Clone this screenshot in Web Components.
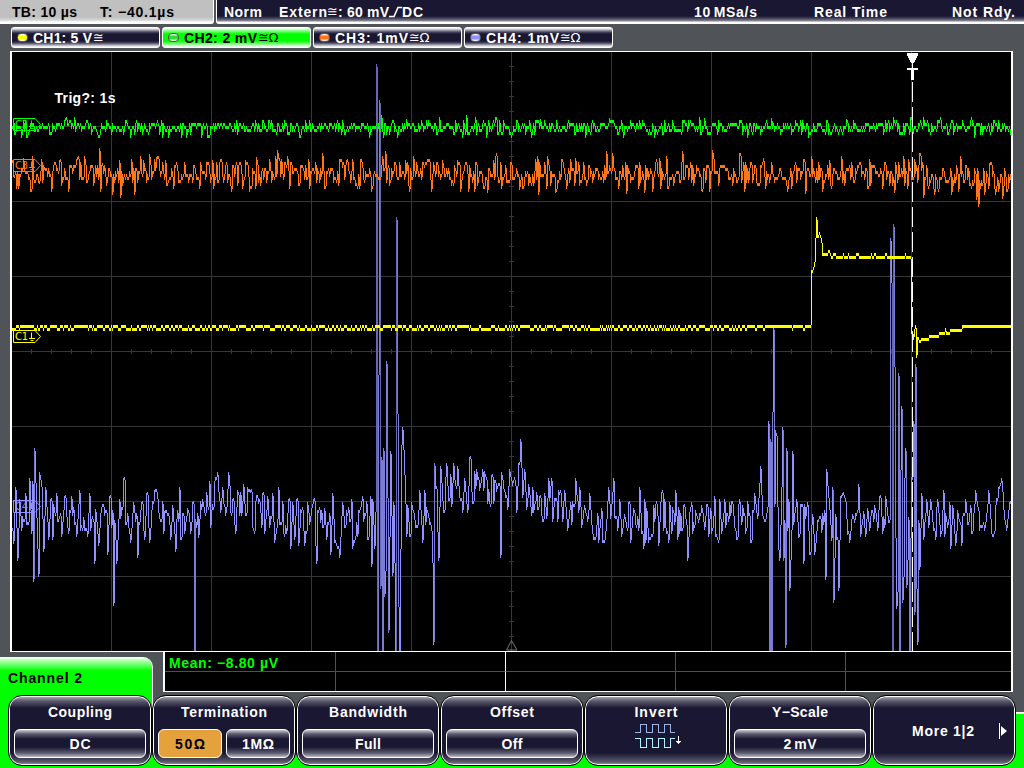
<!DOCTYPE html>
<html lang="en">
<head>
<meta charset="utf-8">
<title>Oscilloscope</title>
<style>
    * { box-sizing: border-box; }
    body {
        margin: 0;
        width: 1024px;
        height: 768px;
        overflow: hidden;
        background: #505458;
        font: bold 14px/16px "Liberation Sans", Arial, sans-serif;
        color: #fff;
    }
</style>
</head>
<body>
<scope-app></scope-app>

<script>
// one line of text, tracked out to the width given in px
class FitLabel extends HTMLElement {
    connectedCallback() {
        if (this.shadowRoot) return;
        this.attachShadow({mode: 'open'}).innerHTML = `
        <style>
            :host { display: block; flex: none; }
            :host([tight]) { word-spacing: -2px; }
            span { display: inline-block; white-space: nowrap; }
        </style>
        <span><slot></slot></span>`;
        const want = Number(this.getAttribute('w'));
        const span = this.shadowRoot.querySelector('span');
        const count = this.textContent.length;
        const natural = span.getBoundingClientRect().width;
        if (want && natural) {
            span.style.letterSpacing = ((want - natural) / (count - 1)).toFixed(3) + 'px';
            this.style.width = want + 'px';
        }
    }
}

class StatusBar extends HTMLElement {
    connectedCallback() {
        this.attachShadow({mode: 'open'}).innerHTML = `
        <style>
            :host { display: flex; height: 24px; gap: 2px; }
            div { display: flex; box-sizing: border-box; padding-top: 4px; height: 24px; }
            .time {
                width: 214px;
                padding-left: 12px;
                gap: 23px;
                color: #000;
                background: linear-gradient(#c0c0c0 17px, #d4d4d4 20px, #fff 22px);
                border-right: 1px solid #fff;
                border-radius: 0 0 3px 0;
            }
            .trig {
                flex: 1;
                padding-left: 7px;
                background: linear-gradient(#1a1733 16px, #3c3a52 18px, #8a8998 21px, #fff 22px);
                border-left: 1px solid #fff;
                border-radius: 0 0 0 3px;
            }
            .cong { font: 13px/16px "DejaVu Sans", sans-serif; width: 11px; }
            svg { display: block; margin-top: 1px; }
        </style>
        <div class="time">
            <fit-label w="65">TB: 10 µs</fit-label>
            <fit-label w="74">T: −40.1µs</fit-label>
        </div>
        <div class="trig">
            <fit-label w="38">Norm</fit-label>
            <fit-label w="48" style="margin-left:17px">Extern</fit-label>
            <span class="cong">≅</span>
            <fit-label w="51">: 60 mV</fit-label>
            <svg width="13" height="14"><path d="M0 11.5h5l4-9h4" fill="none" stroke="#fff" stroke-width="1.6"/></svg>
            <fit-label w="21">DC</fit-label>
            <fit-label w="63" style="margin-left:271px" tight>10 MSa/s</fit-label>
            <fit-label w="73" style="margin-left:57px">Real Time</fit-label>
            <fit-label w="63" style="margin-left:65px">Not Rdy.</fit-label>
        </div>`;
    }
}

class ChannelChip extends HTMLElement {
    connectedCallback() {
        const w = this.getAttribute('w');
        this.attachShadow({mode: 'open'}).innerHTML = `
        <style>
            :host {
                display: flex;
                box-sizing: border-box;
                width: 149px;
                height: 21px;
                padding: 2px 0 0 5px;
                border: 1px solid #fff;
                border-radius: 3px;
                background: linear-gradient(#fff 0, #aaa9b6 2px, #4a4860 4px, #1a1733 6px, #1a1733 13px, #4a4860 15px, #aaa9b6 17px, #fff 19px);
            }
            :host([active]) {
                color: #000;
                background: linear-gradient(#fff 0, #aaffaa 2px, #00ff00 6px, #00ff00 13px, #aaffaa 17px, #fff 19px);
            }
            i {
                width: 11px;
                height: 9px;
                margin: 3px 5px 0 0;
                box-sizing: border-box;
                border: 1px solid #555;
                border-radius: 4px;
                background: linear-gradient(#fff, var(--c) 35%, var(--c) 65%, #fff);
            }
            .unit { font: 13px/16px "DejaVu Sans", sans-serif; padding-left: 1px; letter-spacing: -.3px; }
        </style>
        <i></i><fit-label w="${w}">${this.getAttribute('text')}</fit-label><span class="unit"><slot></slot></span>`;
    }
}

// extremes of the channel 4 signal, x:y
const CH4 = `14:541 16:487 18:558 20:499 22:528 26:493 27:522 30:478 32:531 33:481 34:579 35:448 37:515 39:574 40:472
42:484 44:549 46:487 49:537 51:499 53:537 57:493 58:519 62:534 65:496 67:514 72:496 77:534 80:490 81:528 83:528 84:517 85:528 88:534
90:493 95:561 96:509 99:543 101:513 106:510 108:552 110:496 114:603 115:520 117:561 120:499 124:478 131:540 134:502 138:555
142:502 145:537 147:493 150:540 152:510 155:490 158:496 164:531 165:511 171:537 173:505 176:549 180:487 181:537 185:531
188:508 193:502 195:651 199:535 203:499 206:513 210:481 211:525 215:481 218:472 221:510 223:487 227:507 229:472 233:499
236:531 238:490 242:513 244:484 246:513 248:487 251:490 253:525 255:531 260:499 262:525 263:493 265:531 268:496 270:525
273:493 275:540 279:487 280:522 287:531 289:499 291:546 293:502 295:537 297:499 299:543 301:509 305:543 308:502 310:522
312:508 314:499 317:561 321:520 325:508 327:537 331:552 333:493 335:540 338:546 340:555 343:502 345:525 352:499 353:546
356:536 360:510 363:496 369:537 371:496 372:564 373:499 375:546 376:512 377:64 378:651 380:100 381:586 382:457 383:651
384:448 385:594 386:571 387:361 389:630 391:451 393:573 394:502 396:651 397:217 399:604 400:651 402:445 403:427 405:472
407:534 408:505 410:534 412:502 415:517 420:490 423:540 425:490 429:515 432:528 434:642 435:463 438:529 439:558 441:466
443:498 444:510 447:463 449:498 454:463 458:466 460:495 463:510 465:478 468:510 470:457 473:501 477:469 480:488 483:469
484:488 488:501 492:475 497:489 501:555 502:472 505:489 508:507 510:469 512:478 517:510 519:463 521:439 523:495 525:469
527:507 529:484 532:513 533:487 534:510 540:496 544:519 545:493 547:516 549:478 550:498 552:478 553:519 558:519 559:490
561:490 563:519 565:490 568:528 571:502 572:522 576:478 579:510 580:487 582:525 585:505 588:519 590:493 592:522 594:537
596:537 598:513 599:540 602:508 603:540 606:531 609:487 611:516 614:478 615:515 618:528 620:499 622:534 625:514 628:528
629:502 631:540 634:508 640:487 642:531 644:546 645:499 646:540 647:508 649:540 652:534 654:505 659:543 661:502 663:490
664:528 665:499 666:525 669:540 670:502 672:531 676:490 678:537 682:528 684:505 688:558 690:512 692:502 696:510 699:520
702:505 705:527 709:534 711:508 715:496 716:534 719:540 720:499 722:531 725:499 726:525 730:502 736:528 740:499 742:522
743:505 747:528 751:540 755:493 758:516 761:466 763:513 766:519 768:507 769:421 770:651 771:439 772:651 773:412 774:327
775:504 776:430 777:433 778:504 779:547 780:558 782:487 783:427 784:558 785:520 786:645 787:448 788:528 789:499 790:588
792:530 793:451 794:522 797:499 799:535 804:561 808:502 810:552 813:514 815:552 818:520 822:530 826:577 827:469 830:507
832:538 833:487 834:600 836:514 839:588 841:496 843:493 846:499 848:532 850:540 853:514 855:520 859:484 861:534 864:511
866:534 868:508 870:528 875:505 878:528 880:496 882:514 886:496 889:520 890:520 891:238 892:280 893:651 894:224 895:364
896:535 897:606 898:592 899:373 900:651 901:470 902:406 903:600 904:577 905:478 906:448 907:585 909:517 910:651 911:538
912:477 914:421 915:612 916:364 917:586 918:642 919:520 920:567 922:493 924:537 927:499 929:525 931:499 934:528 938:499
940:522 944:490 945:534 950:502 951:546 953:505 956:543 962:543 966:499 968:522 971:505 972:531 976:490 979:508 984:522
989:490 992:531 995:531 996:505 999:487 1002:478 1005:517 1007:528 1010:502`;

const CH3 = `13:160 15:175 24:158 31:189 40:181 45:167 52:189 60:160 69:189 78:157 100:148 101:189 103:163 113:192 121:195 120:160 135:192
144:160 150:154 157:157 166:160 174:186 213:160 232:189 246:160 257:157 280:158 310:186 347:160 372:189 386:151 406:160 410:189
432:189 443:160 458:160 461:189 488:190 494:160 520:187 536:159 556:190 576:158 607:151 627:191 645:190 660:158 683:151
702:188 713:150 740:153 745:189 764:158 788:189 806:191 830:160 870:159 895:190 915:159 935:192 961:156 977:197 979:204
990:163 1003:196`;

const CH2 = `22:135 27:135 66:118 99:135 131:135 182:135 187:135 208:135 300:135 382:115 384:135 407:119 467:115 463:135
487:135 512:135 541:119 610:118 655:135 705:118 748:135 772:118 809:135 847:119 911:117 913:134 975:135`;

const PULSE = `811:270 812:270 813:267 814:262 815:238 816:217 817:235 818:235 819:232 820:235 821:240 822:253 823:253
827:253 828:250 829:250 830:253 831:256 832:256 833:253 835:253 836:256 842:256 843:253 844:256 847:256 848:253 849:256
855:256 856:253 858:253 859:256 870:256 871:253 872:256 874:253 876:256 884:256 885:253 887:256 904:256 905:253 906:256
910:256 911:331 912:331 913:337 914:329 915:325 916:355 917:337 918:337 919:340 920:340 921:338 928:338 929:335 938:335
939:332 944:332 945:328 946:332 949:332 950:329 961:329 962:325 1010:325`;

const LEFT = 12, RIGHT = 1011;

function random(seed) {
    return () => {
        seed = (seed * 1664525 + 1013904223) >>> 0;
        return seed / 4294967296;
    };
}

function knots(text) {
    return text.trim().split(/\s+/).map(p => p.split(':').map(Number)).sort((a, b) => a[0] - b[0]);
}

// a peak fills its own column and the next, so the sample sits one px left of its centre
function noise(text, seed, base, spread, dense) {
    const rnd = random(seed);
    const ks = knots(text).map(([x, y]) => [x - 1, y]);
    const fixed = new Map(ks);
    const ys = [];
    let k = 0;
    for (let x = LEFT; x < RIGHT; x++) {
        while (k < ks.length - 1 && ks[k][0] <= x) k++;
        const a = ks[Math.max(k - 1, 0)], b = ks[k];
        const gap = b[0] - a[0];
        const r = (rnd() + rnd() + rnd() - 1.5) * spread;
        let y = base(x) + r;
        if (dense && gap > 0 && gap < 4) {
            y = a[1] + (b[1] - a[1]) * (x - a[0]) / gap + r * .2;
        }
        if (ys.length && rnd() < .18) y = ys[ys.length - 1];
        y = Math.round(y / 3) * 3;
        if (y > 560) y = 560;
        ys.push(fixed.has(x) ? fixed.get(x) : y);
    }
    return ys;
}

function channel1() {
    const rnd = random(7);
    const ys = [];
    let low = false;
    for (let x = LEFT; x < 811; x++) {
        if (rnd() < (low ? .4 : .3)) low = !low;
        if (x > 767 && x < 787) low = false;
        ys.push(low ? 328 : 325);
    }
    const ks = knots(PULSE);
    let k = 0;
    for (let x = 811; x < RIGHT; x++) {
        while (k + 1 < ks.length && ks[k + 1][0] <= x) k++;
        ys.push(ks[k][1]);
    }
    return ys;
}

// one column per sample, long columns are drawn dimmer
function columns(ys, color, dims) {
    const paths = ['', '', ''];
    let prev = ys[0];
    ys.forEach((y, i) => {
        let top = y, bottom = y + 3;
        if (prev < y) top = Math.min(prev + 3, y);
        if (prev > y) bottom = Math.max(prev, y + 3);
        const h = bottom - top;
        const level = dims ? (h > 300 ? 2 : h > 110 ? 1 : 0) : 0;
        paths[level] += `M${LEFT + i} ${top}h1v${h}h-1z`;
        prev = y;
    });
    const fills = [color].concat(dims || []);
    return paths.map((d, n) => d ? `<path fill="${fills[n]}" d="${d}"/>` : '').join('');
}

class ScopeScreen extends HTMLElement {
    connectedCallback() {
        const ch4Base = x => x > 435 && x < 530 ? 486 : x > 205 && x < 262 ? 503 : x > 530 && x < 590 ? 507 : 517;
        const traces =
            columns(noise(CH4, 41, ch4Base, 17, true), '#9090ff', ['#7b7bd8', '#6666b4']) +
            columns(noise(CH3, 33, x => x > 920 ? 178 : 172, 15), '#ff7519') +
            columns(channel1(), '#ffff00') +
            columns(noise(CH2, 22, () => 126, 6.5), '#00ff00');

        this.attachShadow({mode: 'open'}).innerHTML = `
        <style>
            :host {
                display: block;
                box-sizing: border-box;
                width: 1003px;
                height: 601px;
                border: solid #fff;
                border-width: 1px 2px;
                background: #000;
            }
            svg { display: block; }
            .tag { font: 10px "DejaVu Sans", sans-serif; }
            .note { font: bold 14px "Liberation Sans", sans-serif; }
        </style>
        <svg width="999" height="599" viewBox="12 52 999 599">
            <g shape-rendering="crispEdges">
                <path fill="#373737" d="${this.grid()}"/>
                ${traces}
                <path d="M912.5 82V651" stroke="#fff" stroke-dasharray="20 5"/>
                <path fill="#fff" d="M907 53h11v2l-4 8h-3l-4-8zM912 63h1v5h-1zM907 68h11v2h-4v10h-3V70h-4z"/>
            </g>
            <path d="M511.500 640.500L517 650H506.500z" fill="none" stroke="#777"/>
            ${this.tag(1, 330.5, '#ffff00')}
            ${this.tag(2, 118.5, '#00ff00')}
            ${this.tag(3, 159.5, '#ff7519')}
            ${this.tag(4, 500.5, '#9090ff')}
            <text class="note" x="54.500" y="103" textLength="61" fill="#fff">Trig?: 1s</text>
        </svg>`;
    }

    grid() {
        let d = '';
        for (let x = 111; x < 1000; x += 100) d += `M${x} 52h1v599h-1z`;
        for (let y = 126; y < 600; y += 75) d += `M12 ${y}h999v1h-999z`;
        for (let x = 31; x < 1010; x += 20) d += `M${x} 349h1v5h-1z`;
        for (let y = 66; y < 650; y += 15) d += `M509 ${y}h5v1h-5z`;
        return d;
    }

    tag(n, y, color) {
        return `<g fill="none" stroke="${color}">
            <path d="M13.500 ${y}h21.500l5.500 6-5.500 6h-21.500z"/>
            <path d="M31.500 ${y + 2}v6M29 ${y + 8}h6M30.500 ${y + 10}h3"/>
            <text class="tag" x="15" y="${y + 9.5}" fill="${color}" stroke="none" textLength="13">C${n}</text>
        </g>`;
    }
}

class StatsBox extends HTMLElement {
    connectedCallback() {
        this.attachShadow({mode: 'open'}).innerHTML = `
        <style>
            :host {
                display: grid;
                box-sizing: border-box;
                grid-template: 20px 19px / 171px 170px 170px 170px 1fr;
                width: 850px;
                height: 40px;
                border: solid #fff;
                border-width: 0 2px 1px;
                background: #000;
                color: #00ff00;
            }
            div { box-sizing: border-box; border-right: 1px solid #505050; }
            .top { border-bottom: 1px solid #505050; }
            .mid { border-right-color: #fff; }
            .last { border-right: 0; }
            fit-label { margin: 3px 0 0 4px; }
        </style>
        <div class="top"><fit-label w="109">Mean: −8.80 µV</fit-label></div>
        <div class="top mid"></div>
        <div class="top"></div>
        <div class="top"></div>
        <div class="top last"></div>
        <div></div>
        <div class="mid"></div>
        <div></div>
        <div></div>
        <div class="last"></div>`;
    }
}

class SoftKey extends HTMLElement {
    connectedCallback() {
        const label = this.getAttribute('label');
        this.attachShadow({mode: 'open'}).innerHTML = `
        <style>
            :host {
                display: flex;
                flex-direction: column;
                align-items: center;
                box-sizing: border-box;
                width: 144px;
                height: 71px;
                padding-top: 8px;
                border: 1px solid #000;
                border-radius: 14px;
                box-shadow: inset 0 0 0 1px #fff;
                background: linear-gradient(#a3a2ad 1px, #5c5a6c 5px, #1a1733 12px, #1a1733 57px, #5c5a6c 66px, #a3a2ad 69px);
            }
            .row { display: flex; gap: 4px; margin-top: 9px; }
        </style>
        ${label ? `<fit-label w="${this.getAttribute('w')}">${label}</fit-label>` : ''}
        <div class="row"><slot></slot></div>`;
    }
}

class KeyValue extends HTMLElement {
    connectedCallback() {
        this.attachShadow({mode: 'open'}).innerHTML = `
        <style>
            :host {
                display: flex;
                justify-content: center;
                box-sizing: border-box;
                width: 132px;
                height: 29px;
                padding-top: 6px;
                border: 1px solid #fff;
                border-radius: 6px;
                background: linear-gradient(#cccbd2 0, #5c5a6c 4px, #1a1733 9px, #1a1733 17px, #5c5a6c 23px, #bbbac4 27px);
            }
            :host([half]) { width: 64px; }
            :host([on]) { color: #000; background: #e5a23c; }
        </style>
        <slot></slot>`;
    }
}

class ScopeApp extends HTMLElement {
    connectedCallback() {
        this.attachShadow({mode: 'open'}).innerHTML = `
        <style>
            :host { display: flex; flex-direction: column; width: 1024px; height: 768px; }
            .chips { display: flex; gap: 2px; padding: 3px 0 3px 11px; }
            scope-screen { margin-left: 10px; }
            .info { display: flex; height: 43px; }
            .tab {
                width: 153px;
                height: 56px;
                margin: 5px 10px 0 0;
                padding: 13px 0 0 8px;
                flex: none;
                box-sizing: border-box;
                color: #000;
                border-right: 1px solid #fff;
                border-radius: 0 10px 0 0;
                background: linear-gradient(#fff, #aaffaa 4px, #00ff00 14px);
            }
            .keys {
                display: flex;
                position: relative;
                height: 73px;
                padding-left: 8px;
                background:
                    linear-gradient(#fff 0 2px, #0f0 2px) 1015px 17px / 9px 56px no-repeat,
                    linear-gradient(#0f0, #0f0) 0 0 / 12px 73px no-repeat,
                    linear-gradient(#0f0, #0f0) 0 60px / 1024px 13px no-repeat;
            }
            .more { margin: 10px 0 0 32px; }
            .arrow { margin: 10px 0 0 20px; }
        </style>
        <status-bar></status-bar>
        <div class="chips">
            <channel-chip text="CH1: 5 V" w="59" style="--c:#ffff00">≅</channel-chip>
            <channel-chip text="CH2: 2 mV" w="73" style="--c:#33dd33" active>≅Ω</channel-chip>
            <channel-chip text="CH3: 1mV" w="73" style="--c:#ff7519">≅Ω</channel-chip>
            <channel-chip text="CH4: 1mV" w="73" style="--c:#9090ff">≅Ω</channel-chip>
        </div>
        <scope-screen></scope-screen>
        <div class="info">
            <div class="tab"><fit-label w="74">Channel 2</fit-label></div>
            <stats-box></stats-box>
        </div>
        <div class="keys">
            <soft-key label="Coupling" w="64"><key-value><fit-label w="21">DC</fit-label></key-value></soft-key>
            <soft-key label="Termination" w="86">
                <key-value half on><fit-label w="30">50Ω</fit-label></key-value>
                <key-value half><fit-label w="32">1MΩ</fit-label></key-value>
            </soft-key>
            <soft-key label="Bandwidth" w="78"><key-value><fit-label w="26">Full</fit-label></key-value></soft-key>
            <soft-key label="Offset" w="44"><key-value><fit-label w="21">Off</fit-label></key-value></soft-key>
            <soft-key label="Invert" w="43">
                <svg width="48" height="27" style="margin:-6px 0 0 3px" fill="none" shape-rendering="crispEdges">
                    <path d="M1 9.500h5.500v-8h6v8h6v-8h6v8h6v-8h6v8h4" stroke="#9fb4e6"/>
                    <path d="M1 15.500h5.500v9h6v-9h6v9h6v-9h6v9h6v-9h4" stroke="#b4f0ff"/>
                    <path d="M44.500 13v8M42 18.500h5M43 19.500h3M44 20.500h1" stroke="#fff"/>
                </svg>
            </soft-key>
            <soft-key label="Y−Scale" w="56"><key-value><fit-label w="33" tight>2 mV</fit-label></key-value></soft-key>
            <soft-key>
                <fit-label class="more" w="62">More 1|2</fit-label>
                <svg class="arrow" width="10" height="16"><path d="M1 0h1v16h-1zM3 3l6 5-6 5z" fill="#fff"/></svg>
            </soft-key>
        </div>`;
    }
}

customElements.define('fit-label', FitLabel);
customElements.define('status-bar', StatusBar);
customElements.define('channel-chip', ChannelChip);
customElements.define('scope-screen', ScopeScreen);
customElements.define('stats-box', StatsBox);
customElements.define('soft-key', SoftKey);
customElements.define('key-value', KeyValue);
customElements.define('scope-app', ScopeApp);
</script>
</body>
</html>
